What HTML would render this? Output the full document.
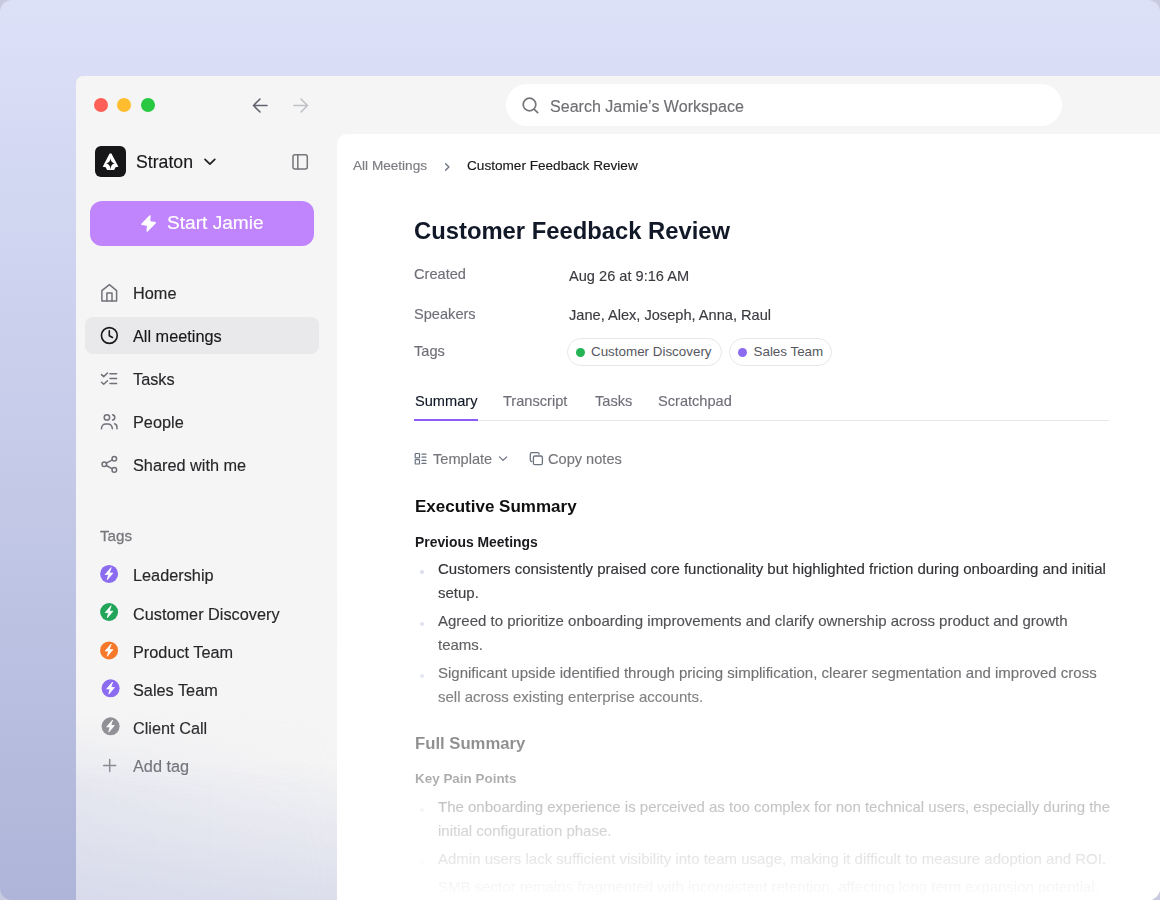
<!DOCTYPE html>
<html><head><meta charset="utf-8">
<style>
*{box-sizing:border-box;margin:0;padding:0}
html,body{width:1160px;height:900px;overflow:hidden;background:#c8cbe0}
body{font-family:"Liberation Sans",sans-serif;position:relative;-webkit-font-smoothing:antialiased}
.t,ul.b{will-change:transform;-webkit-text-stroke:0.15px currentColor}
.abs{position:absolute}
#frame{position:absolute;left:0;top:0;width:1160px;height:900px;border-radius:12px;overflow:hidden;
 background:linear-gradient(180deg,#dde1f8 0%,#dbdff7 4.4%,#d2d7f2 21%,#c5cbe8 50%,#b0b7da 94%,#aeb5d9 100%)}
#win{position:absolute;left:76px;top:76px;width:1200px;height:900px;background:#f5f5f5;border-top-left-radius:7px;overflow:hidden}
.tl{position:absolute;top:98px;width:14px;height:14px;border-radius:50%}
#content{position:absolute;left:337px;top:134px;width:900px;height:900px;background:#fff;border-top-left-radius:10px}
.t{position:absolute;white-space:nowrap;line-height:1}
.nav{color:#27272a;font-size:16.3px;left:133px}
.tag{color:#27272a;font-size:16.3px;left:133px}
.lbl{color:#6e6f78;font-size:14.6px;left:414px}
.val{color:#3a3a40;font-size:14.6px;left:569px}
.tab{color:#6e6f78;font-size:14.6px;top:394px}
.pill{position:absolute;top:338px;height:28px;border:1px solid #e5e7eb;border-radius:14px;background:#fff}
.dot{position:absolute;width:9px;height:9px;border-radius:50%;top:347.5px}
.pt{position:absolute;white-space:nowrap;line-height:1;font-size:13.4px;color:#56575e;top:345.4px}
ul.b{position:absolute;left:438px;width:690px;list-style:none;font-size:15px;line-height:24px;color:#2c2c31}
ul.b li{position:relative;margin-bottom:4px;white-space:nowrap}
ul.b li:before{content:"";position:absolute;left:-18px;top:13.2px;width:4px;height:4px;border-radius:50%;background:#d9dcea}
</style></head>
<body>
<div id="frame">
 <div id="win"></div>
 <!-- traffic lights -->
 <div class="tl" style="left:93.7px;background:#fe5f57"></div>
 <div class="tl" style="left:117.4px;background:#febc2e"></div>
 <div class="tl" style="left:141.1px;background:#28c840"></div>

 <!-- search -->
 <div class="abs" style="left:506px;top:84px;width:556px;height:42px;border-radius:21px;background:#fff"></div>
 <div class="t" style="left:549.5px;top:98px;font-size:16.06px;color:#6e6e73">Search Jamie’s Workspace</div>

 <!-- sidebar -->
 <div class="abs" style="left:95px;top:146px;width:31px;height:31px;border-radius:6px;background:#161618"></div>
 <div class="t" style="left:135.5px;top:153.6px;font-size:17.7px;color:#18181b">Straton</div>
 <div class="abs" style="left:90px;top:201px;width:224px;height:45px;border-radius:12px;background:#c084fc"></div>
 <div class="t" style="left:166.5px;top:213px;font-size:19.1px;color:#fff">Start Jamie</div>

 <div class="abs" style="left:85px;top:317px;width:234px;height:37px;border-radius:8px;background:#e9e9ec"></div>
 <div class="t nav" style="top:285.2px">Home</div>
 <div class="t nav" style="top:328.2px;color:#18181b">All meetings</div>
 <div class="t nav" style="top:371.2px">Tasks</div>
 <div class="t nav" style="top:414.2px">People</div>
 <div class="t nav" style="top:457.2px">Shared with me</div>

 <div class="t" style="left:100px;top:527.7px;font-size:15.15px;color:#77777d;-webkit-text-stroke:0.3px #77777d">Tags</div>
 <div class="t tag" style="top:567.4px">Leadership</div>
 <div class="t tag" style="top:605.5px">Customer Discovery</div>
 <div class="t tag" style="top:643.6px">Product Team</div>
 <div class="t tag" style="top:681.7px">Sales Team</div>
 <div class="t tag" style="top:719.8px">Client Call</div>
 <div class="t tag" style="top:757.9px;color:#606066">Add tag</div>

 <div id="content"></div>
 <!-- breadcrumb -->
 <div class="t" style="left:352.5px;top:159px;font-size:13.6px;color:#7b7b82">All Meetings</div>
 <div class="t" style="left:466.5px;top:159px;font-size:13.6px;color:#18181b">Customer Feedback Review</div>
 <!-- title -->
 <div class="t" style="left:414px;top:218.6px;font-size:23.8px;font-weight:bold;-webkit-text-stroke:0;color:#111827">Customer Feedback Review</div>
 <div class="t lbl" style="top:267px">Created</div>
 <div class="t val" style="top:268.8px">Aug 26 at 9:16 AM</div>
 <div class="t lbl" style="top:306.6px">Speakers</div>
 <div class="t val" style="top:307.9px">Jane, Alex, Joseph, Anna, Raul</div>
 <div class="t lbl" style="top:344.3px">Tags</div>
 <div class="pill" style="left:567px;width:155px"></div>
 <div class="dot" style="left:576px;background:#22b455"></div>
 <div class="pt" style="left:591px">Customer Discovery</div>
 <div class="pill" style="left:729px;width:103px"></div>
 <div class="dot" style="left:737.5px;background:#8b6cf1"></div>
 <div class="pt" style="left:753.5px">Sales Team</div>
 <!-- tabs -->
 <div class="t tab" style="left:415px;color:#111827">Summary</div>
 <div class="t tab" style="left:502.5px">Transcript</div>
 <div class="t tab" style="left:595px">Tasks</div>
 <div class="t tab" style="left:658px">Scratchpad</div>
 <div class="abs" style="left:414px;top:420px;width:695px;height:1px;background:#e7e8ec"></div>
 <div class="abs" style="left:414px;top:419px;width:64px;height:2px;background:#8b5cf6"></div>
 <!-- toolbar -->
 <div class="t" style="left:432.5px;top:451.6px;font-size:14.6px;color:#75757b">Template</div>
 <div class="t" style="left:547.5px;top:451.6px;font-size:14.6px;color:#75757b">Copy notes</div>

 <div class="t" style="left:414.5px;top:497.6px;font-size:17px;font-weight:bold;-webkit-text-stroke:0;color:#0f0f10">Executive Summary</div>
 <div class="t" style="left:414.5px;top:535.7px;font-size:13.9px;font-weight:bold;-webkit-text-stroke:0;color:#1a1a1e">Previous Meetings</div>
 <ul class="b" style="top:556.7px">
  <li>Customers consistently praised core functionality but highlighted friction during onboarding and initial<br>setup.</li>
  <li>Agreed to prioritize onboarding improvements and clarify ownership across product and growth<br>teams.</li>
  <li>Significant upside identified through pricing simplification, clearer segmentation and improved cross<br>sell across existing enterprise accounts.</li>
 </ul>
 <div class="t" style="left:414.5px;top:736.2px;font-size:16.7px;font-weight:bold;-webkit-text-stroke:0;color:#0f0f10">Full Summary</div>
 <div class="t" style="left:414.5px;top:772px;font-size:13.44px;font-weight:bold;-webkit-text-stroke:0;color:#1a1a1e">Key Pain Points</div>
 <ul class="b" style="top:795px">
  <li>The onboarding experience is perceived as too complex for non technical users, especially during the<br>initial configuration phase.</li>
  <li>Admin users lack sufficient visibility into team usage, making it difficult to measure adoption and ROI.</li>
  <li>SMB sector remains fragmented with inconsistent retention, affecting long term expansion potential.</li>
 </ul>

 <!-- icons overlay -->
 <svg class="abs" style="left:0;top:0" width="1160" height="900" viewBox="0 0 1160 900" fill="none" stroke-linecap="round" stroke-linejoin="round">
  <!-- arrows -->
  <g stroke="#62656f" stroke-width="1.6"><path d="M267 105.5H254M260 99l-6.5 6.5 6.5 6.5"/></g>
  <g stroke="#c0c2c8" stroke-width="1.6"><path d="M294 105.5h13M301 99l6.5 6.5-6.5 6.5"/></g>
  <!-- search -->
  <g stroke="#76767b" stroke-width="1.7"><circle cx="529.5" cy="104.5" r="6.3"/><path d="M534.3 109.3l3.4 3.4"/></g>
  <!-- logo -->
  <g transform="translate(95.2 146.4)">
   <path fill="#fff" d="M14.4 7.2L16.2 7.2L23.2 20.3L20.3 20.8L18.9 23.5L11.9 23.5L10.5 20.8L7.5 20.3Z"/>
   <path fill="#161618" d="M15.3 11.9Q15.7 16.3 19.4 16.9Q15.7 17.6 15.3 23.2Q14.9 17.6 11.0 16.9Q14.9 16.3 15.3 11.9Z"/>
  </g>
  <!-- chevron straton -->
  <path stroke="#1f1f23" stroke-width="1.7" d="M205 159.3l4.9 4.9 4.9-4.9"/>
  <!-- panel toggle -->
  <g stroke="#76767b" stroke-width="1.5"><rect x="293" y="154.8" width="14.3" height="14.2" rx="2"/><path d="M297.8 154.8v14.2"/></g>
  <!-- start jamie bolt -->
  <path fill="#fff" stroke="#fff" stroke-width="1.6" d="M149.9 216L142 224.2L147.9 225.2L147.2 230.9L155.2 222.8L149.4 221.8Z"/>
  <!-- nav icons -->
  <g stroke="#71717a" stroke-width="1.5">
   <path d="M101.9 290.6L109.4 284.6L116.6 290.6V300.9H101.9Z"/><path d="M106.9 300.9V292.9H112V300.9"/>
   <path d="M101.5 374.6l2.2 2 3.8-3.6M101.5 382.3l2.2 2 3.8-3.6M110 373.7h6.6M110 378.5h6.6M110 383.4h6.6"/>
   <circle cx="106.9" cy="417.4" r="2.7"/><path d="M101.5 428.8v-.6a4.3 4.3 0 0 1 4.3-4.3h2.2a4.3 4.3 0 0 1 4.3 4.3v.6"/><path d="M112.6 414.8a2.7 2.7 0 0 1 0 5.3"/><path d="M114.6 423.8a3.6 3.6 0 0 1 2.4 3.4v1.6"/>
   <circle cx="114.3" cy="458.7" r="2.3"/><circle cx="104.3" cy="464.3" r="2.3"/><circle cx="114.3" cy="469.9" r="2.3"/><path d="M106.3 463.1l6-3.3M106.3 465.5l6 3.3"/>
  </g>
  <g stroke="#18181b" stroke-width="1.6"><circle cx="109.35" cy="335.5" r="7.9"/><path d="M109.3 330.8v4.9l3.2 1.8"/></g>
  <!-- tag icons -->
  <g id="bolts">
   <circle cx="109.1" cy="573.9" r="9" fill="#8b6cf1"/>
   <circle cx="109.1" cy="612" r="9" fill="#22a55a"/>
   <circle cx="109.1" cy="650.4" r="9" fill="#f6782a"/>
   <circle cx="110.6" cy="688.3" r="9" fill="#8b6cf1"/>
   <circle cx="110.6" cy="726.3" r="9" fill="#8e8e93"/>
  </g>
  <g fill="#fff" stroke="#fff" stroke-width="0.8">
   <path transform="translate(109.1 573.9)" d="M1.8 -6L-3.9 0.6L-0.5 0.6L-1.8 5.8L3.8 -0.8L0.4 -0.8Z"/>
   <path transform="translate(109.1 612)" d="M1.8 -6L-3.9 0.6L-0.5 0.6L-1.8 5.8L3.8 -0.8L0.4 -0.8Z"/>
   <path transform="translate(109.1 650.4)" d="M1.8 -6L-3.9 0.6L-0.5 0.6L-1.8 5.8L3.8 -0.8L0.4 -0.8Z"/>
   <path transform="translate(110.6 688.3)" d="M1.8 -6L-3.9 0.6L-0.5 0.6L-1.8 5.8L3.8 -0.8L0.4 -0.8Z"/>
   <path transform="translate(110.6 726.3)" d="M1.8 -6L-3.9 0.6L-0.5 0.6L-1.8 5.8L3.8 -0.8L0.4 -0.8Z"/>
  </g>
  <path stroke="#76767b" stroke-width="1.5" d="M109.7 759.4v12M103.7 765.4h12"/>
  <!-- breadcrumb chevron -->
  <path stroke="#6b7280" stroke-width="1.3" d="M445.6 163.7l3.3 3.3-3.3 3.3"/>
  <!-- template icon -->
  <g stroke="#6b7280" stroke-width="1.2">
   <rect x="415.2" y="453.5" width="4.3" height="4.3" rx=".6"/><rect x="415.2" y="459.7" width="4.3" height="4.3" rx=".6"/>
   <path d="M422 454.2h4M422 457.2h4M422 460.4h4M422 463.4h4"/>
  </g>
  <path stroke="#6b7280" stroke-width="1.2" d="M499.5 456.8l3.6 3.6 3.6-3.6"/>
  <!-- copy icon -->
  <g stroke="#6b7280" stroke-width="1.3"><rect x="533.4" y="456" width="9" height="8.7" rx="1.5"/><path d="M531.8 461.5c-.9 0-1.5-.6-1.5-1.5v-5.8c0-.9.6-1.5 1.5-1.5h5.8c.9 0 1.5.6 1.5 1.5"/></g>
 </svg>

 <!-- fades -->
 <div class="abs" style="left:337px;top:560px;width:823px;height:340px;background:linear-gradient(180deg,rgba(255,255,255,0) 0%,rgba(255,255,255,.33) 33%,rgba(255,255,255,.55) 55%,rgba(255,255,255,1) 100%)"></div>
 <div class="abs" style="left:76px;top:760px;width:261px;height:140px;background:linear-gradient(180deg,rgba(208,211,232,0) 0%,rgba(208,211,232,.68) 100%)"></div>
 <div class="abs" style="left:76px;top:715px;width:261px;height:185px;background:linear-gradient(90deg,rgba(208,211,232,.34) 0%,rgba(208,211,232,.12) 60%,rgba(208,211,232,0) 100%);-webkit-mask-image:linear-gradient(180deg,transparent 0%,#000 40%,#000 100%)"></div>
</div>
</body></html>
